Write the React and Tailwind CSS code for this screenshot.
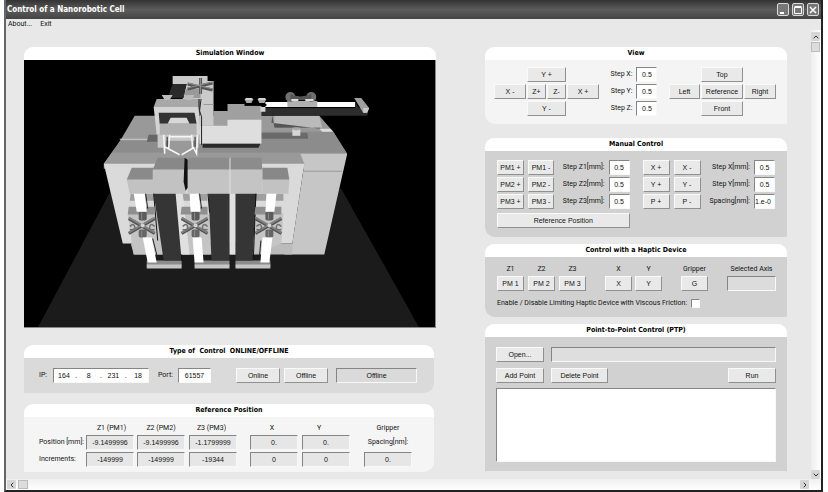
import React from "react";
import { ChevronUp, ChevronDown, ChevronLeft, ChevronRight } from "lucide-react";

const labelFont = "font-['Roboto','Noto_Sans',sans-serif] text-[7px] leading-[9px] text-[#111] whitespace-nowrap";
const controlFont = "font-['Liberation_Sans',Arial,sans-serif] text-[7px] leading-[9px] text-[#111] whitespace-nowrap";
const sunken = "border border-t-[#858585] border-l-[#858585] border-r-[#f8f8f8] border-b-[#f8f8f8]";

function Button({ className = "", children, ...rest }) {
  return (
    <button
      type="button"
      className={`flex h-[15px] items-center justify-center border border-t-[#fafafa] border-l-[#fafafa] border-r-[#909090] border-b-[#909090] bg-[#e9e9e9] ${controlFont} ${className}`}
      {...rest}
    >
      {children}
    </button>
  );
}

function Field({ className = "", readOnly = false, tone = "bg-white", ...rest }) {
  return (
    <input
      type="text"
      readOnly={readOnly}
      className={`block h-[15px] min-w-0 rounded-none text-center outline-none ${tone} ${sunken} ${controlFont} ${className}`}
      {...rest}
    />
  );
}

function Group({ title, className = "", corners = "", children }) {
  return (
    <section>
      <h2 className="flex h-[13px] items-center justify-center rounded-t-[9px] bg-white font-['DejaVu_Sans_Condensed','DejaVu_Sans',sans-serif] text-[7px] leading-[9px] font-bold whitespace-pre text-black">
        {title}
      </h2>
      <div className={`${corners} ${className}`}>{children}</div>
    </section>
  );
}

function StepRow({ id, label, value, align = "text-center" }) {
  return (
    <>
      <label htmlFor={id} className={`text-right ${labelFont}`}>{label}</label>
      <Field id={id} defaultValue={value} className={`w-[21px] ${align}`} />
    </>
  );
}

function Clamp({ x, y }) {
  return (
    <g transform={`translate(${x} ${y})`}>
      <path fill="#8f8f8f" d="M-14-20H12V-12H-15z" />
      <rect x="-4" y="-15" width="8" height="9" rx="2" fill="#5c5c5c" />
      <path d="M-14-8L12 7M12-8L-14 7" stroke="#505050" strokeWidth="3" />
      <path d="M-14-9L12 6M12-9L-14 6" stroke="#808080" strokeWidth="2" />
      <path d="M-13 0q4-4 5 0t-5 3M12 0q-4-4-5 0t5 3" stroke="#707070" strokeWidth="1.5" fill="none" />
      <rect x="-4" y="3" width="8" height="8" rx="2" fill="#666" />
      <path d="M-1-14V-7M-1 4V10" stroke="#8c8c8c" />
      <circle r="2" cy="-1" fill="#d4d4d4" />
    </g>
  );
}

function Scene() {
  return (
    <svg viewBox="24 59 412 268" className="block w-full bg-black" role="img" aria-label="Simulation of the nanorobotic cell">
      <path fill="#1b1b1b" d="M38 327L112 188H342L420 327z" />
      {/* housing */}
      <path fill="#999" d="M135 115H320L334 131L348 153L325 168H104V163L121 139z" />
      <path fill="#8c8c8c" d="M121 140L112 152H347L334 131H262V140z" />
      <path fill="#cfcfcf" d="M120 138H160V139H120z" />
      <path fill="#999" d="M112 152H301L305 163H104z" />
      <path fill="#dadada" d="M104 163H305L293 243H123z" />
      <path fill="#c6c6c6" d="M301 153H348L325 254H285L293 243L305 163z" />
      <path stroke="#999" d="M304 170.500H343" />
      <path fill="#bbb" d="M131 243H293V254H134z" />
      <path fill="#a0a0a0" d="M131 193H153L156 200H130zM183 193H208V200H184zM256 193H284V200H256z" />
      <path fill="#c4c4c4" d="M128 213H160L163 254H134zM182 213H211V254H182zM257 213H284L282 243L254 254z" />
      <path fill="#e0e0e0" d="M176 193H183L190 254H180zM230 190H236V254H230z" />
      {/* front beams */}
      <path fill="#8a8a8a" d="M132 167H154V179H127z" />
      <path fill="#c2c2c2" d="M127 179H154V193H130z" />
      <path fill="#888" d="M158 157H185L186 169H153z" />
      <path fill="#c2c2c2" d="M153 169H186V193H153z" />
      <path fill="#8c8c8c" d="M189 157H262L263 169H187z" />
      <path fill="#c4c4c4" d="M188 169H263V193H188z" />
      <path fill="#888" d="M263 167H288L290 179H263z" />
      <path fill="#c2c2c2" d="M263 179H290L289 193H263z" />
      <path fill="#111" d="M185 157L188 159V187L186 190L184 181z" />
      <path stroke="#e2e2e2" d="M230.500 157V193" />
      {/* feet and guide panels */}
      <path fill="#8c8c8c" d="M147 260H182V265H147zM195 260H230V265H195zM236 260H271V265H236z" />
      <path fill="#c6c6c6" d="M147 264H182V268H147zM195 264H230V268H195zM236 264H271V268H236z" />
      <path fill="#353535" d="M154 193H176L182 260H164zM209 193H230V260H212zM236 193H257L253 260H236z" />
      <path stroke="#111" d="M154 193L158 240M208.500 193L210 212M256.500 193L254 256M182 254V260" />
      <Clamp x={143} y={226} />
      <Clamp x={196} y={226} />
      <Clamp x={270} y={226} />
      <path fill="#fff" d="M134 193H145L147 211H137zM143 237H152L157 262H148zM190 193H199L201 211H191zM193 237H202L204 262H195zM267 193H277L275 211H266zM263 237H273L270 262H261z" />
      <path stroke="#222" d="M146 193L148 208M153 238L158 258M200 193L202 208M261.500 240L260 256" />
      {/* right arm */}
      <path fill="#bababa" d="M275 115H320L323 127H275z" />
      <path fill="#555" d="M273 115L275 127H321V128L272 122z" />
      <path fill="#ddd" d="M320 128H331L334 131H323z" />
      <path fill="#6a6a6a" d="M262 132H308L309 138H262z" />
      <path fill="#d5d5d5" d="M293 128H301V135H293z" />
      <ellipse cx="297" cy="128" rx="4" ry="1.500" fill="#a8a8a8" />
      <path fill="#2d2d2d" d="M266 107H362L369 112L368 115H262L261 111z" />
      <path fill="#fff" d="M266 101H356V106H266z" />
      <path fill="#b0b0b0" d="M288 100H318V106H288z" />
      <circle cx="291" cy="96" r="5" fill="#707070" />
      <circle cx="312" cy="96" r="5" fill="#707070" />
      <path fill="#555" d="M291 93Q301 98 312 93V99H291z" />
      <path fill="#ddd" d="M292 98H299V100H292zM306 98H314V100H306z" />
      <path fill="#2d2d2d" d="M356 102L364 112H356z" />
      <path fill="#a0a0a0" d="M355 97H362L370 107L368 112H364z" />
      <path fill="#c8c8c8" d="M364 107H370L368 112H364z" />
      {/* centre carriage */}
      <path fill="#a0a0a0" d="M214 110H228V103H262V125H214z" />
      <path fill="#dedede" d="M200 125H228V119H262V143H200z" />
      <path fill="#2a2a2a" d="M203 143H261L259 147H203z" />
      <path fill="#000" d="M245 103H267V105H245z" />
      <path fill="#aaa" d="M245 98H254L252 102H247zM258 98H267L265 102H260z" />
      <path fill="#d4d4d4" d="M246 97H253V99H246zM259 97H266V99H259zM261 106H266V111H261z" />
      {/* head */}
      <path fill="#cacaca" d="M173 75H208V80H214V125H200V98H183L187 83H173z" />
      <path fill="#2a2a2a" d="M173 83H187L184 97H168z" />
      <path fill="#999" d="M186 88H201V97H185zM204 103H214V104H204z" />
      <path stroke="#555" strokeWidth="3" d="M188 83L213 89M213 82L188 88M201 77V93" />
      <path stroke="#909090" d="M188 82L213 88M213 81L188 87M201 77V93" />
      <path fill="#a8a8a8" d="M157 98H199V106H154z" />
      <path fill="#d4d4d4" d="M154 106H199L201 134H157z" />
      <path fill="#666" d="M149 134H158V141H147z" />
      <path fill="#c8c8c8" d="M158 134H199V147H158z" />
      <path fill="#999" d="M166 140H196V153H166z" />
      <path fill="#333" d="M159 112H195L197 123H160z" />
      <path fill="#d8d8d8" d="M171 117H187L190 123H168z" />
      <path fill="#b0b0b0" d="M160 123H197V134H160z" />
      <path stroke="#222" d="M201.500 98L200 110L202 116V144" fill="none" />
      <path fill="#bbb" d="M162 94H173L170 99H165zM184 94H195L192 99H187z" />
      <path stroke="#f6f6f6" strokeWidth="1.500" fill="none" d="M164 134L165 153V146L180 154M170 134L169 148M198 134L197 153L194 147L182 154M192 134L193 148M170 136H192" />
      <path stroke="#222" fill="none" d="M167.500 136V146M195.500 136V146" />
    </svg>
  );
}

function ViewGroup() {
  return (
    <Group title="View" corners="rounded-bl-[10px]" className="flex h-[64px] justify-between bg-[#f4f4f4] pt-[7px] pr-[11px] pl-[9px]">
      <div className="grid grid-cols-[32px_19px_19px_32px] content-start gap-x-px gap-y-0.5">
        <Button className="col-span-2 col-start-2">Y +</Button>
        <Button className="col-start-1">X -</Button>
        <Button>Z+</Button>
        <Button>Z-</Button>
        <Button>X +</Button>
        <Button className="col-span-2 col-start-2">Y -</Button>
      </div>
      <div className="grid grid-cols-[auto_auto] content-start items-center gap-x-1 gap-y-0.5">
        <StepRow id="view-x" label="Step X:" value="0.5" />
        <StepRow id="view-y" label="Step Y:" value="0.5" />
        <StepRow id="view-z" label="Step Z:" value="0.5" />
      </div>
      <div className="grid grid-cols-[31px_42px_32px] content-start gap-x-px gap-y-0.5">
        <Button className="col-start-2">Top</Button>
        <Button className="col-start-1">Left</Button>
        <Button>Reference</Button>
        <Button>Right</Button>
        <Button className="col-start-2">Front</Button>
      </div>
    </Group>
  );
}

function ManualGroup() {
  return (
    <Group title="Manual Control" corners="rounded-bl-[10px]" className="grid h-[86px] grid-cols-2 content-start gap-x-[13px] gap-y-1 bg-[#d1d1d1] px-3 pt-[9px]">
      <div className="grid grid-cols-[27px_26px_1fr_21px] items-center gap-x-1 gap-y-0.5">
        <Button>PM1 +</Button><Button>PM1 -</Button>
        <StepRow id="step-z1" label="Step Z1[mm]:" value="0.5" />
        <Button>PM2 +</Button><Button>PM2 -</Button>
        <StepRow id="step-z2" label="Step Z2[mm]:" value="0.5" />
        <Button>PM3 +</Button><Button>PM3 -</Button>
        <StepRow id="step-z3" label="Step Z3[mm]:" value="0.5" />
      </div>
      <div className="grid grid-cols-[27px_27px_1fr_21px] items-center gap-x-1 gap-y-0.5">
        <Button>X +</Button><Button>X -</Button>
        <StepRow id="step-x" label="Step X[mm]:" value="0.5" />
        <Button>Y +</Button><Button>Y -</Button>
        <StepRow id="step-y" label="Step Y[mm]:" value="0.5" />
        <Button>P +</Button><Button>P -</Button>
        <StepRow id="spacing" label="Spacing[nm]:" value="1.e-0" align="text-left" />
      </div>
      <Button>Reference Position</Button>
    </Group>
  );
}

function AxisButton({ label, children }) {
  return (
    <div className="flex flex-col items-center gap-0.5">
      <span className={labelFont}>{label}</span>
      <Button className="w-[27px]">{children}</Button>
    </div>
  );
}

function HapticGroup() {
  return (
    <Group title="Control with a Haptic Device" corners="rounded-bl-[10px]" className="h-[60px] bg-[#d1d1d1] pt-2 pr-[11px] pl-3">
      <div className="flex justify-between">
        <div className="flex gap-1">
          <AxisButton label="Z1">PM 1</AxisButton>
          <AxisButton label="Z2">PM 2</AxisButton>
          <AxisButton label="Z3">PM 3</AxisButton>
        </div>
        <div className="flex gap-[3px]">
          <AxisButton label="X">X</AxisButton>
          <AxisButton label="Y">Y</AxisButton>
        </div>
        <AxisButton label="Gripper">G</AxisButton>
        <div className="flex flex-col items-center gap-0.5">
          <label htmlFor="axis" className={labelFont}>Selected Axis</label>
          <Field id="axis" readOnly tone="bg-[#dcdcdc]" className="w-[49px]" />
        </div>
      </div>
      <div className="mt-2 flex items-center gap-1">
        <label htmlFor="friction" className={labelFont}>Enable / Disable Limiting Haptic Device with Viscous Friction:</label>
        <input id="friction" type="checkbox" className={`size-[9px] appearance-none bg-white ${sunken}`} />
      </div>
    </Group>
  );
}

function PointGroup() {
  return (
    <Group title="Point-to-Point Control (PTP)" className="flex h-[134px] flex-col bg-[#d1d1d1] px-[11px] pt-[10px] pb-[9px]">
      <div className="flex gap-[7px]">
        <Button className="w-12">Open...</Button>
        <Field aria-label="File" readOnly tone="bg-[#dedede]" className="flex-1" />
      </div>
      <div className="mt-[6px] flex gap-[7px]">
        <Button className="w-12">Add Point</Button>
        <Button className="w-[57px]">Delete Point</Button>
        <Button className="ml-auto w-12">Run</Button>
      </div>
      <textarea aria-label="Points" className={`mt-[5px] block w-full flex-1 resize-none rounded-none bg-white outline-none ${sunken} ${controlFont}`} />
    </Group>
  );
}

function ConnectionGroup() {
  return (
    <Group title="Type of  Control  ONLINE/OFFLINE" corners="rounded-br-[10px]" className="flex h-[35px] items-center bg-[#dadada] pr-[17px] pl-[15px]">
      <label htmlFor="ip-1" className={`w-[14px] ${labelFont}`}>IP:</label>
      <div className={`flex h-[15px] w-[96px] items-center justify-around bg-white ${sunken} ${controlFont}`}>
        <input id="ip-1" aria-label="IP part 1" defaultValue="164" className="w-[17px] text-center outline-none" />.
        <input aria-label="IP part 2" defaultValue="8" className="w-[17px] text-center outline-none" />.
        <input aria-label="IP part 3" defaultValue="231" className="w-[17px] text-center outline-none" />.
        <input aria-label="IP part 4" defaultValue="18" className="w-[17px] text-center outline-none" />
      </div>
      <label htmlFor="port" className={`ml-[9px] w-[20px] ${labelFont}`}>Port:</label>
      <Field id="port" defaultValue="61557" className="w-[33px]" />
      <Button className="ml-auto w-[44px]">Online</Button>
      <Button className="ml-1 w-[44px]">Offline</Button>
      <Field aria-label="Status" readOnly value="Offline" tone="bg-[#dadada]" className="ml-2 w-[81px]" />
    </Group>
  );
}

function Readout({ label, value }) {
  return (
    <td className="p-0">
      <Field aria-label={label} readOnly value={value} tone="bg-[#e6e6e6]" className="w-12" />
    </td>
  );
}

function ReferenceGroup() {
  const head = `p-0 text-center font-normal ${labelFont}`;
  const side = `p-0 text-left font-normal ${labelFont}`;
  return (
    <Group title="Reference Position" corners="rounded-br-[10px]" className="h-[55px] bg-[#f5f5f5] pt-[6px] pl-[15px]">
      <table className="w-[373px] table-fixed border-collapse">
        <colgroup>
          <col className="w-[47px]" />
          <col className="w-[51px]" />
          <col className="w-[52px]" />
          <col className="w-[61px]" />
          <col className="w-[52px]" />
          <col className="w-[62px]" />
          <col className="w-[48px]" />
        </colgroup>
        <thead>
          <tr className="h-[11px]">
            <td />
            <th className={head}>Z1 (PM1)</th>
            <th className={`${head} pr-1`}>Z2 (PM2)</th>
            <th className={`${head} pr-4`}>Z3 (PM3)</th>
            <th className={`${head} pr-2`}>X</th>
            <th className={`${head} pr-7`}>Y</th>
            <th className={head}>Gripper</th>
          </tr>
        </thead>
        <tbody>
          <tr className="h-[17px]">
            <th className={side}>Position [mm]:</th>
            <Readout label="Z1 position" value="-9.1499996" />
            <Readout label="Z2 position" value="-9.1499996" />
            <Readout label="Z3 position" value="-1.1799999" />
            <Readout label="X position" value="0." />
            <Readout label="Y position" value="0." />
            <th className={head}>Spacing[nm]:</th>
          </tr>
          <tr className="h-[17px]">
            <th className={side}>Increments:</th>
            <Readout label="Z1 increments" value="-149999" />
            <Readout label="Z2 increments" value="-149999" />
            <Readout label="Z3 increments" value="-19344" />
            <Readout label="X increments" value="0" />
            <Readout label="Y increments" value="0" />
            <Readout label="Gripper spacing" value="0." />
          </tr>
        </tbody>
      </table>
    </Group>
  );
}

function CaptionButton({ label, children }) {
  return (
    <button type="button" aria-label={label} className="flex h-[13px] w-3 items-center justify-center rounded-[2px] border border-[#d8d8d8] bg-[#777]">
      <svg viewBox="0 0 10 10" className="size-[10px]" fill="none" stroke="#fff">{children}</svg>
    </button>
  );
}

function ScrollButton({ label, icon: Icon }) {
  return (
    <button type="button" aria-label={label} className="flex size-[9px] items-center justify-center rounded-[1px] bg-[#d6d6d6] text-[#333]">
      <Icon size={8} strokeWidth={3} />
    </button>
  );
}

export default function App() {
  return (
    <div className="min-h-screen bg-white pr-[5px] pl-1">
      <div className="flex min-h-screen flex-col border-x-2 border-b-2 border-[#222] border-l-[#666] bg-[#e8e8e8]">
        <header className="flex h-[19px] items-center gap-[3px] bg-linear-to-b from-[#333] via-[#5c5c5c] to-[#444] pr-0.5 pl-px">
          <h1 className="flex-1 font-['DejaVu_Sans_Condensed','DejaVu_Sans',sans-serif] text-[8px] leading-[11px] font-bold text-white">
            Control of a Nanorobotic Cell
          </h1>
          <CaptionButton label="Minimize"><path strokeWidth="2" d="M2 8H6" /></CaptionButton>
          <CaptionButton label="Maximize"><path d="M1.500 2.500H8.500V8.500H1.500zM1.500 1.500H8.500" /></CaptionButton>
          <CaptionButton label="Close"><path strokeWidth="1.500" d="M2 2L8 8M8 2L2 8" /></CaptionButton>
        </header>
        <nav className="flex h-[11px] items-center gap-2 pl-0.5">
          <button type="button" className={labelFont}>About...</button>
          <button type="button" className={labelFont}>Exit</button>
        </nav>
        <div className="flex flex-1">
          <main className="grid flex-1 grid-cols-[412fr_302fr] content-start gap-x-[49px] pt-[17px] pr-6 pl-[18px]">
            <div className="flex flex-col">
              <Group title="Simulation Window" className="border-r border-b border-[#888]">
                <Scene />
              </Group>
              <div className="mt-[17px] mr-0.5 flex flex-col gap-[11px]">
                <ConnectionGroup />
                <ReferenceGroup />
              </div>
            </div>
            <div className="flex flex-col">
              <ViewGroup />
              <div className="mt-[14px] flex flex-col gap-[7px]">
                <ManualGroup />
                <HapticGroup />
                <PointGroup />
              </div>
            </div>
          </main>
          <div className="flex w-[10px] flex-col bg-linear-to-r from-[#eee] to-white pt-0.5">
            <ScrollButton label="Scroll up" icon={ChevronUp} />
            <div className="mt-px h-[10px] w-[9px] border border-[#bbb] bg-[#dcdcdc]" />
            <div className="mt-auto"><ScrollButton label="Scroll down" icon={ChevronDown} /></div>
          </div>
        </div>
        <div className="flex h-[11px] items-center bg-linear-to-b from-[#f0f0f0] to-white pr-3 pl-px">
          <ScrollButton label="Scroll left" icon={ChevronLeft} />
          <div className="ml-0.5 h-[9px] w-[10px] border border-[#bbb] bg-[#dcdcdc]" />
          <div className="ml-auto"><ScrollButton label="Scroll right" icon={ChevronRight} /></div>
        </div>
      </div>
    </div>
  );
}
